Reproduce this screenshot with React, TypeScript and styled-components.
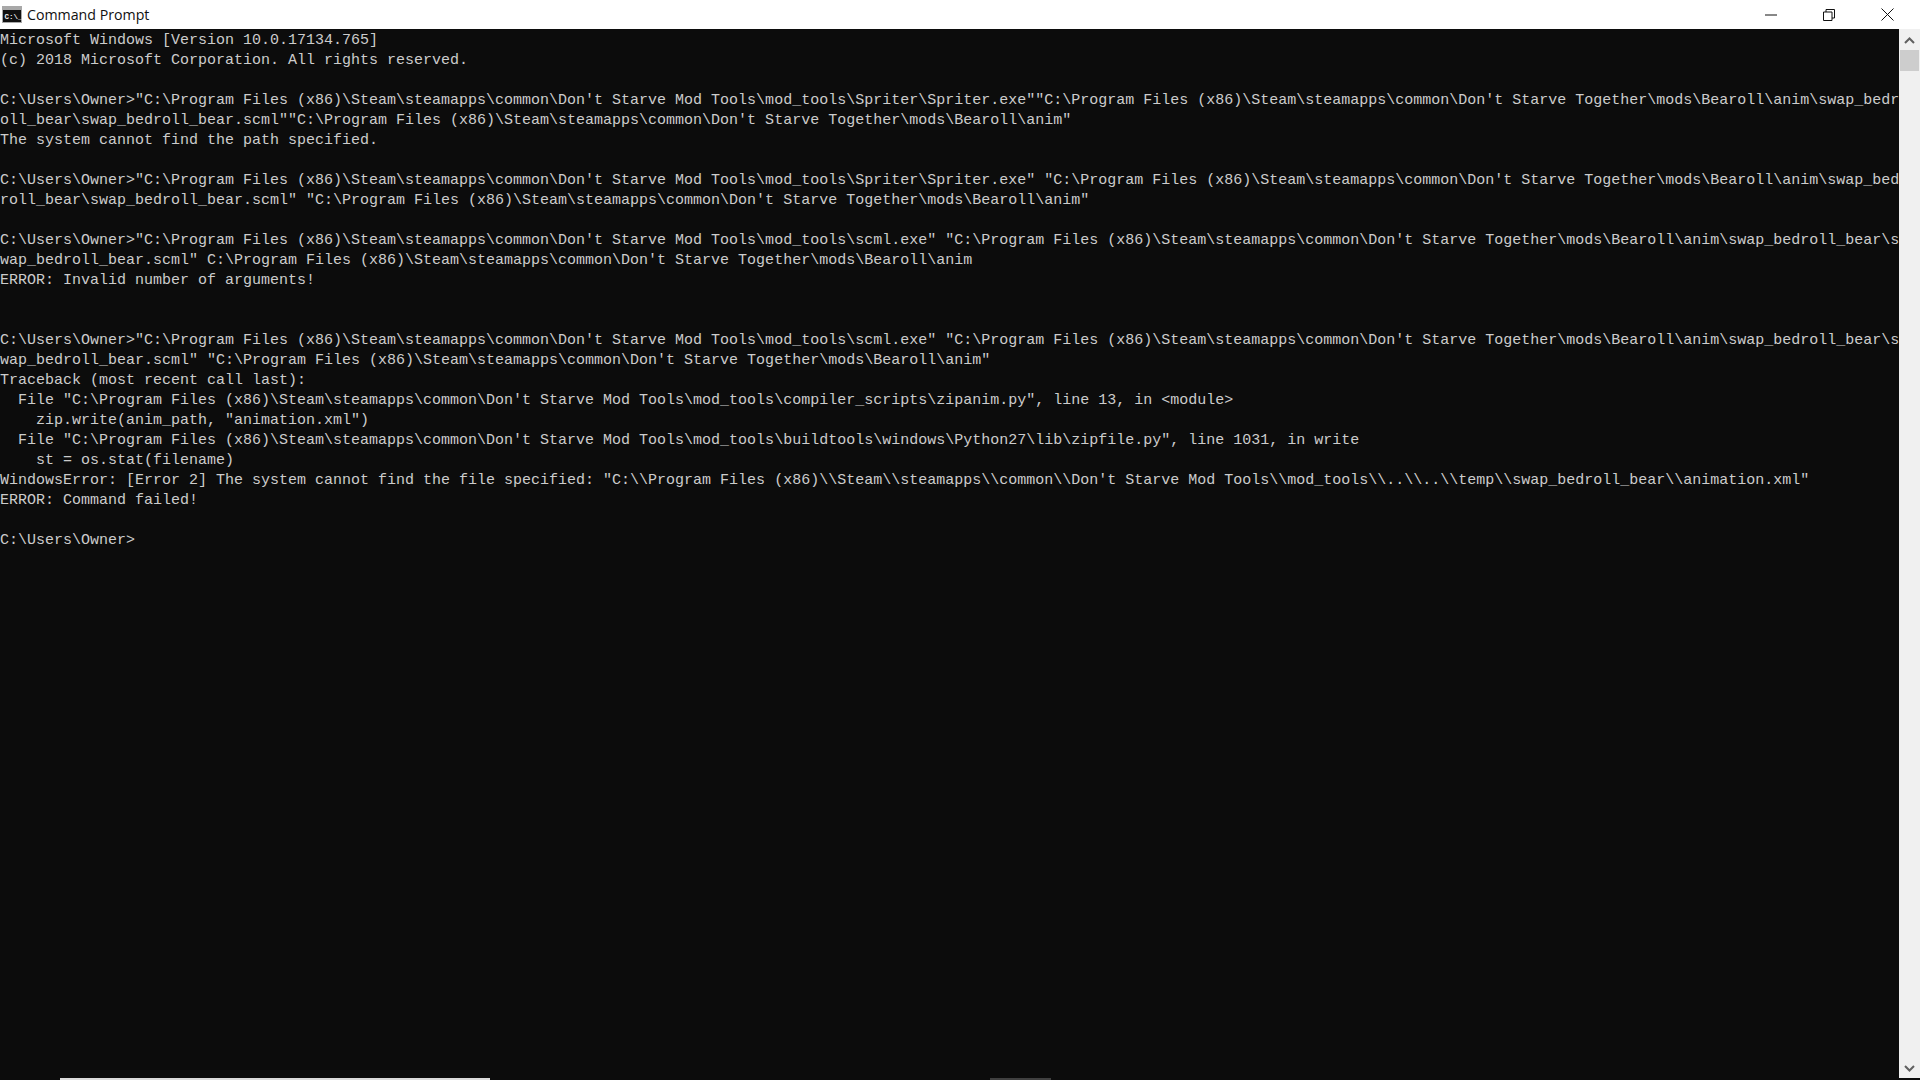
import styled, { createGlobalStyle } from "styled-components"

const GlobalStyle = createGlobalStyle`
  html, body {
    margin: 0;
    padding: 0;
    background: #0c0c0c;
    overflow: hidden;
  }
`

const Window = styled.div`
  width: 1920px;
  height: 1080px;
  display: flex;
  flex-direction: column;
  overflow: hidden;
`

const TitleBar = styled.div`
  height: 29px;
  flex: none;
  display: flex;
  align-items: center;
  padding-right: 4px;
  background: #fff;
`

const AppIcon = styled.svg`
  width: 20px;
  height: 17px;
  flex: none;
  margin-left: 2px;
`

const Title = styled.span`
  margin-left: 5px;
  margin-bottom: 1px;
  font: 14.2px "Open Sans", "Noto Sans", sans-serif;
  color: #111;
`

const WindowControls = styled.div`
  margin-left: auto;
  display: flex;
`

const WindowButton = styled.div`
  width: 58px;
  height: 29px;
  display: flex;
  align-items: center;
  justify-content: center;
`

const Body = styled.div`
  flex: 1;
  min-height: 0;
  display: flex;
`

const Console = styled.pre`
  flex: 1;
  min-width: 0;
  margin: 0;
  padding-top: 2px;
  overflow: hidden;
  background: #0c0c0c;
  color: #cccccc;
  font: 15px/20px "Liberation Mono", monospace;
`

const ScrollBar = styled.div`
  width: 21px;
  flex: none;
  display: flex;
  flex-direction: column;
  align-items: center;
  background: #f0f0f0;
`

const ScrollArrow = styled.svg<{ $down?: boolean }>`
  width: 11px;
  height: 7px;
  flex: none;
  margin: ${p => (p.$down ? "auto 0 6px" : "8px 0 0")};
`

const ScrollThumb = styled.div`
  width: 19px;
  height: 21px;
  margin-top: 6px;
  background: #cdcdcd;
`

const BottomEdge = styled.div`
  height: 2px;
  flex: none;
  display: flex;
  background: #0c0c0c;
`

const EdgeStrip = styled.div<{ $width: number; $offset: number; $color: string }>`
  width: ${p => p.$width}px;
  margin-left: ${p => p.$offset}px;
  background: ${p => p.$color};
`

const lines = [
  "Microsoft Windows [Version 10.0.17134.765]",
  "(c) 2018 Microsoft Corporation. All rights reserved.",
  "",
  `C:\\Users\\Owner>"C:\\Program Files (x86)\\Steam\\steamapps\\common\\Don't Starve Mod Tools\\mod_tools\\Spriter\\Spriter.exe""C:\\Program Files (x86)\\Steam\\steamapps\\common\\Don't Starve Together\\mods\\Bearoll\\anim\\swap_bedr`,
  `oll_bear\\swap_bedroll_bear.scml""C:\\Program Files (x86)\\Steam\\steamapps\\common\\Don't Starve Together\\mods\\Bearoll\\anim"`,
  "The system cannot find the path specified.",
  "",
  `C:\\Users\\Owner>"C:\\Program Files (x86)\\Steam\\steamapps\\common\\Don't Starve Mod Tools\\mod_tools\\Spriter\\Spriter.exe" "C:\\Program Files (x86)\\Steam\\steamapps\\common\\Don't Starve Together\\mods\\Bearoll\\anim\\swap_bed`,
  `roll_bear\\swap_bedroll_bear.scml" "C:\\Program Files (x86)\\Steam\\steamapps\\common\\Don't Starve Together\\mods\\Bearoll\\anim"`,
  "",
  `C:\\Users\\Owner>"C:\\Program Files (x86)\\Steam\\steamapps\\common\\Don't Starve Mod Tools\\mod_tools\\scml.exe" "C:\\Program Files (x86)\\Steam\\steamapps\\common\\Don't Starve Together\\mods\\Bearoll\\anim\\swap_bedroll_bear\\s`,
  `wap_bedroll_bear.scml" C:\\Program Files (x86)\\Steam\\steamapps\\common\\Don't Starve Together\\mods\\Bearoll\\anim`,
  "ERROR: Invalid number of arguments!",
  "",
  "",
  `C:\\Users\\Owner>"C:\\Program Files (x86)\\Steam\\steamapps\\common\\Don't Starve Mod Tools\\mod_tools\\scml.exe" "C:\\Program Files (x86)\\Steam\\steamapps\\common\\Don't Starve Together\\mods\\Bearoll\\anim\\swap_bedroll_bear\\s`,
  `wap_bedroll_bear.scml" "C:\\Program Files (x86)\\Steam\\steamapps\\common\\Don't Starve Together\\mods\\Bearoll\\anim"`,
  "Traceback (most recent call last):",
  `  File "C:\\Program Files (x86)\\Steam\\steamapps\\common\\Don't Starve Mod Tools\\mod_tools\\compiler_scripts\\zipanim.py", line 13, in <module>`,
  `    zip.write(anim_path, "animation.xml")`,
  `  File "C:\\Program Files (x86)\\Steam\\steamapps\\common\\Don't Starve Mod Tools\\mod_tools\\buildtools\\windows\\Python27\\lib\\zipfile.py", line 1031, in write`,
  "    st = os.stat(filename)",
  `WindowsError: [Error 2] The system cannot find the file specified: "C:\\\\Program Files (x86)\\\\Steam\\\\steamapps\\\\common\\\\Don't Starve Mod Tools\\\\mod_tools\\\\..\\\\..\\\\temp\\\\swap_bedroll_bear\\\\animation.xml"`,
  "ERROR: Command failed!",
  "",
  "C:\\Users\\Owner>",
]

export default function App() {
  return (
    <Window>
      <GlobalStyle />
      <TitleBar>
        <AppIcon viewBox="0 0 20 17">
          <rect width="20" height="17" fill="#a8a8a8" />
          <rect x="1" y="4" width="18" height="12" fill="#101010" />
          <text x="2.5" y="13" fill="#f0f0f0" fontFamily="Liberation Mono, monospace" fontSize="7.5" fontWeight="700">C:\_</text>
        </AppIcon>
        <Title>Command Prompt</Title>
        <WindowControls>
          <WindowButton>
            <svg width="12" height="2" viewBox="0 0 12 2">
              <path d="M0 1h12" stroke="#111" />
            </svg>
          </WindowButton>
          <WindowButton>
            <svg width="12" height="12" viewBox="0 0 12 12">
              <path d="M0.5 3h8.5v8.5H0.5zM3 3V0.5h8.5V9H9" fill="none" stroke="#111" />
            </svg>
          </WindowButton>
          <WindowButton>
            <svg width="13" height="13" viewBox="0 0 13 13">
              <path d="M0.5 0.5l12 12M12.5 0.5l-12 12" stroke="#111" />
            </svg>
          </WindowButton>
        </WindowControls>
      </TitleBar>
      <Body>
        <Console>{lines.join("\n")}</Console>
        <ScrollBar>
          <ScrollArrow viewBox="0 0 11 7">
            <path d="M1 6l4.5-4.5L10 6" fill="none" stroke="#606060" strokeWidth="2" />
          </ScrollArrow>
          <ScrollThumb />
          <ScrollArrow $down viewBox="0 0 11 7">
            <path d="M1 1l4.5 4.5L10 1" fill="none" stroke="#606060" strokeWidth="2" />
          </ScrollArrow>
        </ScrollBar>
      </Body>
      <BottomEdge>
        <EdgeStrip $offset={60} $width={430} $color="#dcdcdc" />
        <EdgeStrip $offset={500} $width={61} $color="#404040" />
      </BottomEdge>
    </Window>
  )
}
